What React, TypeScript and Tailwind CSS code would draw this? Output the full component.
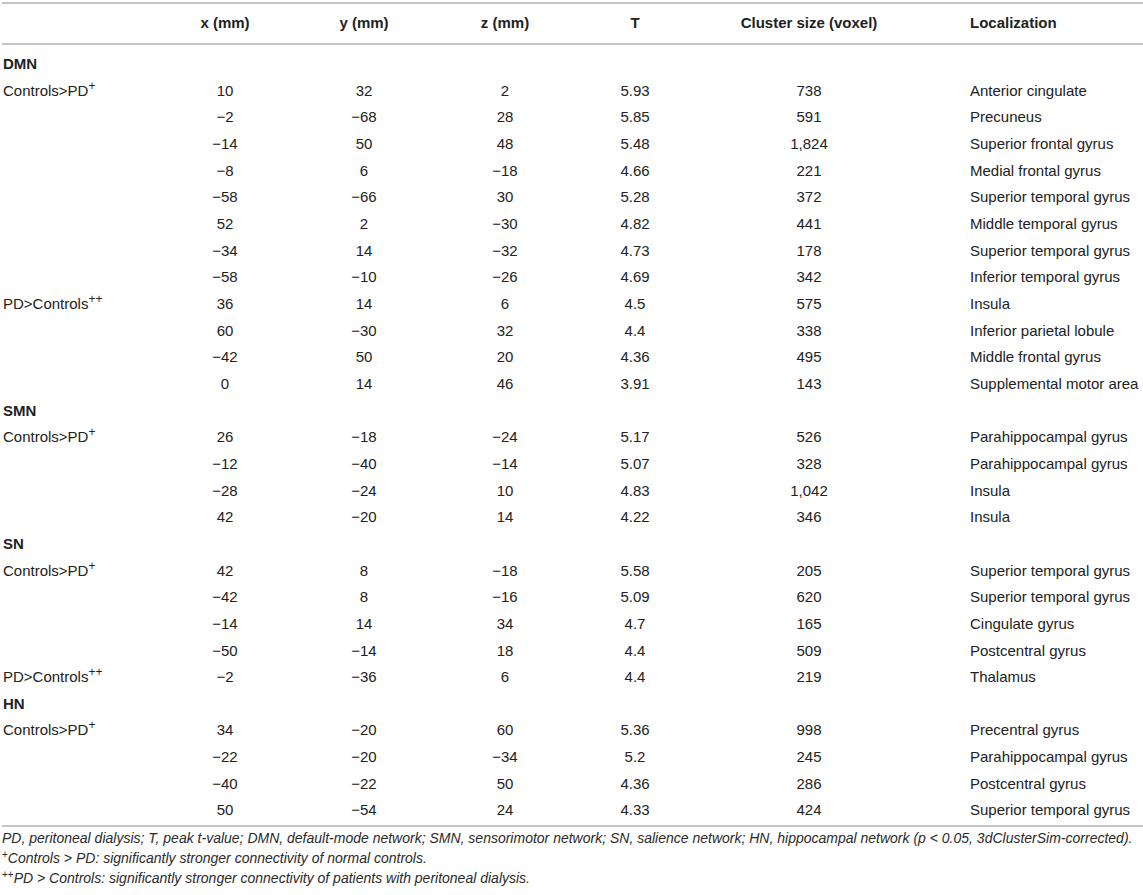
import React from 'react';

type DataRow = {
  label?: 'c' | 'p';
  x: string;
  y: string;
  z: string;
  t: string;
  size: string;
  loc: string;
};

type Section = { name: string; rows: DataRow[] };

const r = (label: DataRow['label'], x: string, y: string, z: string, t: string, size: string, loc: string): DataRow => ({
  label, x, y, z, t, size, loc,
});

const sections: Section[] = [
  {
    name: 'DMN',
    rows: [
      r('c', '10', '32', '2', '5.93', '738', 'Anterior cingulate'),
      r(undefined, '−2', '−68', '28', '5.85', '591', 'Precuneus'),
      r(undefined, '−14', '50', '48', '5.48', '1,824', 'Superior frontal gyrus'),
      r(undefined, '−8', '6', '−18', '4.66', '221', 'Medial frontal gyrus'),
      r(undefined, '−58', '−66', '30', '5.28', '372', 'Superior temporal gyrus'),
      r(undefined, '52', '2', '−30', '4.82', '441', 'Middle temporal gyrus'),
      r(undefined, '−34', '14', '−32', '4.73', '178', 'Superior temporal gyrus'),
      r(undefined, '−58', '−10', '−26', '4.69', '342', 'Inferior temporal gyrus'),
      r('p', '36', '14', '6', '4.5', '575', 'Insula'),
      r(undefined, '60', '−30', '32', '4.4', '338', 'Inferior parietal lobule'),
      r(undefined, '−42', '50', '20', '4.36', '495', 'Middle frontal gyrus'),
      r(undefined, '0', '14', '46', '3.91', '143', 'Supplemental motor area'),
    ],
  },
  {
    name: 'SMN',
    rows: [
      r('c', '26', '−18', '−24', '5.17', '526', 'Parahippocampal gyrus'),
      r(undefined, '−12', '−40', '−14', '5.07', '328', 'Parahippocampal gyrus'),
      r(undefined, '−28', '−24', '10', '4.83', '1,042', 'Insula'),
      r(undefined, '42', '−20', '14', '4.22', '346', 'Insula'),
    ],
  },
  {
    name: 'SN',
    rows: [
      r('c', '42', '8', '−18', '5.58', '205', 'Superior temporal gyrus'),
      r(undefined, '−42', '8', '−16', '5.09', '620', 'Superior temporal gyrus'),
      r(undefined, '−14', '14', '34', '4.7', '165', 'Cingulate gyrus'),
      r(undefined, '−50', '−14', '18', '4.4', '509', 'Postcentral gyrus'),
      r('p', '−2', '−36', '6', '4.4', '219', 'Thalamus'),
    ],
  },
  {
    name: 'HN',
    rows: [
      r('c', '34', '−20', '60', '5.36', '998', 'Precentral gyrus'),
      r(undefined, '−22', '−20', '−34', '5.2', '245', 'Parahippocampal gyrus'),
      r(undefined, '−40', '−22', '50', '4.36', '286', 'Postcentral gyrus'),
      r(undefined, '50', '−54', '24', '4.33', '424', 'Superior temporal gyrus'),
    ],
  },
];

const cols = 'grid grid-cols-[160px_126px_152px_130px_130px_218px_1fr]';

const Label = ({ kind }: { kind?: 'c' | 'p' }) => {
  if (kind === 'c') {
    return (
      <span>
        Controls&gt;PD<sup className="text-[12px]">+</sup>
      </span>
    );
  }
  if (kind === 'p') {
    return (
      <span>
        PD&gt;Controls<sup className="text-[12px]">++</sup>
      </span>
    );
  }
  return null;
};

export default function App() {
  return (
    <div className="bg-white w-[1143px] h-[895px] overflow-hidden text-[#222] font-['Liberation_Sans',Arial,sans-serif] text-[15px]">
      <div className="ml-[2px] mt-[2px]">
        {/* header */}
        <div className={`${cols} h-[43px] items-center border-y-2 border-[#c4c4c4] font-bold`}>
          <div />
          <div className="text-center">x (mm)</div>
          <div className="text-center">y (mm)</div>
          <div className="text-center">z (mm)</div>
          <div className="text-center">T</div>
          <div className="text-center">Cluster size (voxel)</div>
          <div className="pl-[52px]">Localization</div>
        </div>

        {/* body */}
        <div className="pt-[6px] pb-[1px] border-b-2 border-[#c4c4c4]">
          {sections.map(sec => (
            <React.Fragment key={sec.name}>
              <div className={`${cols} h-[26.67px] items-center font-bold`}>
                <div className="pl-[1px]">{sec.name}</div>
              </div>
              {sec.rows.map((row, i) => (
                <div key={sec.name + i} className={`${cols} h-[26.67px] items-center`}>
                  <div className="pl-[1px] whitespace-nowrap">
                    <Label kind={row.label} />
                  </div>
                  <div className="text-center">{row.x}</div>
                  <div className="text-center">{row.y}</div>
                  <div className="text-center">{row.z}</div>
                  <div className="text-center">{row.t}</div>
                  <div className="text-center">{row.size}</div>
                  <div className="pl-[52px] whitespace-nowrap">{row.loc}</div>
                </div>
              ))}
            </React.Fragment>
          ))}
        </div>

        {/* footnotes */}
        <div className="pt-[1px] italic text-[14px] leading-[20px] text-[#2a2a2a] whitespace-nowrap">
          <p>
            PD, peritoneal dialysis; T, peak t-value; DMN, default-mode network; SMN, sensorimotor network; SN, salience
            network; HN, hippocampal network (p &lt; 0.05, 3dClusterSim-corrected).
          </p>
          <p>
            <sup className="text-[10px] not-italic">+</sup>Controls &gt; PD: significantly stronger connectivity of normal controls.
          </p>
          <p>
            <sup className="text-[10px] not-italic">++</sup>PD &gt; Controls: significantly stronger connectivity of patients with
            peritoneal dialysis.
          </p>
        </div>
      </div>
    </div>
  );
}
